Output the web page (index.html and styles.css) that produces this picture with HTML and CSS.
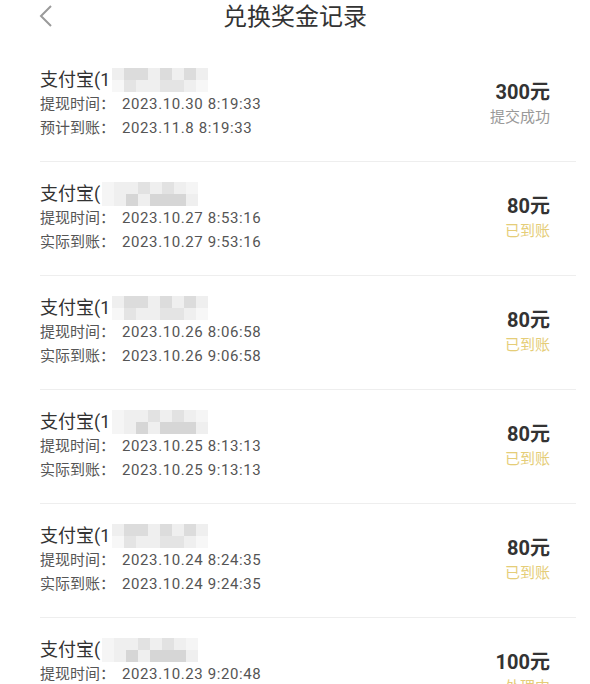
FILE: index.html
```html
<!DOCTYPE html>
<html lang="zh-CN">
<head>
  <meta charset="UTF-8" />
  <title>兑换奖金记录</title>
  <meta name="viewport" content="width=device-width, initial-scale=1.0" />
  <link rel="stylesheet" href="styles.css">
</head>
<body>

  <div class="header">
    <span class="back">
      <svg width="14" height="24" viewBox="0 0 14 24"><polyline points="12,2 2,12 12,22" fill="none" stroke="#9a9a9a" stroke-width="2" /></svg>
    </span>
    <h1>兑换奖金记录</h1>
  </div>

  <ul class="records">
    <li class="record">
      <div class="info">
        <div class="account">支付宝(1<span class="mosaic a"><i></i><i></i><i></i><i></i><i></i><i></i><i></i><i></i><i></i><i></i><i></i><i></i><i></i><i></i><i></i><i></i></span></div>
        <div class="line">提现时间：<span class="time">2023.10.30 8:19:33</span></div>
        <div class="line">预计到账：<span class="time">2023.11.8 8:19:33</span></div>
      </div>
      <div class="result">
        <div class="amount">300元</div>
        <div class="status pending">提交成功</div>
      </div>
    </li>
    <li class="record">
      <div class="info">
        <div class="account">支付宝(<span class="mosaic b"><i></i><i></i><i></i><i></i><i></i><i></i><i></i><i></i><i></i><i></i><i></i><i></i><i></i><i></i><i></i><i></i></span></div>
        <div class="line">提现时间：<span class="time">2023.10.27 8:53:16</span></div>
        <div class="line">实际到账：<span class="time">2023.10.27 9:53:16</span></div>
      </div>
      <div class="result">
        <div class="amount">80元</div>
        <div class="status done">已到账</div>
      </div>
    </li>
    <li class="record">
      <div class="info">
        <div class="account">支付宝(1<span class="mosaic a"><i></i><i></i><i></i><i></i><i></i><i></i><i></i><i></i><i></i><i></i><i></i><i></i><i></i><i></i><i></i><i></i></span></div>
        <div class="line">提现时间：<span class="time">2023.10.26 8:06:58</span></div>
        <div class="line">实际到账：<span class="time">2023.10.26 9:06:58</span></div>
      </div>
      <div class="result">
        <div class="amount">80元</div>
        <div class="status done">已到账</div>
      </div>
    </li>
    <li class="record">
      <div class="info">
        <div class="account">支付宝(1<span class="mosaic b"><i></i><i></i><i></i><i></i><i></i><i></i><i></i><i></i><i></i><i></i><i></i><i></i><i></i><i></i><i></i><i></i></span></div>
        <div class="line">提现时间：<span class="time">2023.10.25 8:13:13</span></div>
        <div class="line">实际到账：<span class="time">2023.10.25 9:13:13</span></div>
      </div>
      <div class="result">
        <div class="amount">80元</div>
        <div class="status done">已到账</div>
      </div>
    </li>
    <li class="record">
      <div class="info">
        <div class="account">支付宝(1<span class="mosaic a"><i></i><i></i><i></i><i></i><i></i><i></i><i></i><i></i><i></i><i></i><i></i><i></i><i></i><i></i><i></i><i></i></span></div>
        <div class="line">提现时间：<span class="time">2023.10.24 8:24:35</span></div>
        <div class="line">实际到账：<span class="time">2023.10.24 9:24:35</span></div>
      </div>
      <div class="result">
        <div class="amount">80元</div>
        <div class="status done">已到账</div>
      </div>
    </li>
    <li class="record">
      <div class="info">
        <div class="account">支付宝(<span class="mosaic b"><i></i><i></i><i></i><i></i><i></i><i></i><i></i><i></i><i></i><i></i><i></i><i></i><i></i><i></i><i></i><i></i></span></div>
        <div class="line">提现时间：<span class="time">2023.10.23 9:20:48</span></div>
        <div class="line">实际到账：<span class="time">2023.10.23 10:20:48</span></div>
      </div>
      <div class="result">
        <div class="amount">100元</div>
        <div class="status done">处理中</div>
      </div>
    </li>
  </ul>

</body>
</html>
```

FILE: styles.css
```css
body {
  margin: 0;
  background-color: #fff;
  color: #333;
  font-family: Roboto, "Noto Sans CJK SC", sans-serif;
  overflow: hidden;
}

.header {
  position: relative;
  height: 48px;
  display: flex;
  align-items: flex-start;
  justify-content: center;
}

.header h1 {
  margin: 0;
  font-size: 24px;
  font-weight: normal;
  line-height: 34px;
  color: #333;
}

.back {
  position: absolute;
  left: 39px;
  top: 4px;
}

.records {
  list-style: none;
  margin: 0;
  padding: 0 14px 0 40px;
}

.record {
  display: flex;
  align-items: center;
  justify-content: space-between;
  padding: 20px 26px 21px 0;
  border-bottom: 1px solid #eeeeee;
}

.account {
  font-size: 18px;
  line-height: 24px;
  color: #333;
  display: flex;
  align-items: center;
}

.line {
  font-size: 15px;
  line-height: 24px;
  color: #555;
}

.time {
  margin-left: 7px;
  letter-spacing: 0.6px;
}

.mosaic {
  display: inline-grid;
  grid-template-columns: repeat(8, 12px);
  grid-template-rows: repeat(2, 12px);
  margin-left: 2px;
}

.mosaic i {
  background-color: #efefef;
}

.mosaic.a i:nth-child(2),
.mosaic.a i:nth-child(3),
.mosaic.a i:nth-child(5),
.mosaic.a i:nth-child(7) {
  background-color: #dcdcdc;
}

.mosaic.a i:nth-child(10),
.mosaic.a i:nth-child(13),
.mosaic.a i:nth-child(14) {
  background-color: #e4e4e4;
}

.mosaic.a i:nth-child(9),
.mosaic.a i:nth-child(16) {
  background-color: #f7f7f7;
}

.mosaic.b i:nth-child(1),
.mosaic.b i:nth-child(8),
.mosaic.b i:nth-child(9) {
  background-color: #f5f5f5;
}

.mosaic.b i:nth-child(11),
.mosaic.b i:nth-child(13),
.mosaic.b i:nth-child(14),
.mosaic.b i:nth-child(15) {
  background-color: #d6d6d6;
}

.mosaic.b i:nth-child(4),
.mosaic.b i:nth-child(6) {
  background-color: #e2e2e2;
}

.result {
  text-align: right;
}

.amount {
  font-size: 20px;
  font-weight: bold;
  line-height: 26px;
  color: #333;
}

.status {
  font-size: 15px;
  line-height: 24px;
}

.pending {
  color: #999;
}

.done {
  color: #e5cd78;
}
```
